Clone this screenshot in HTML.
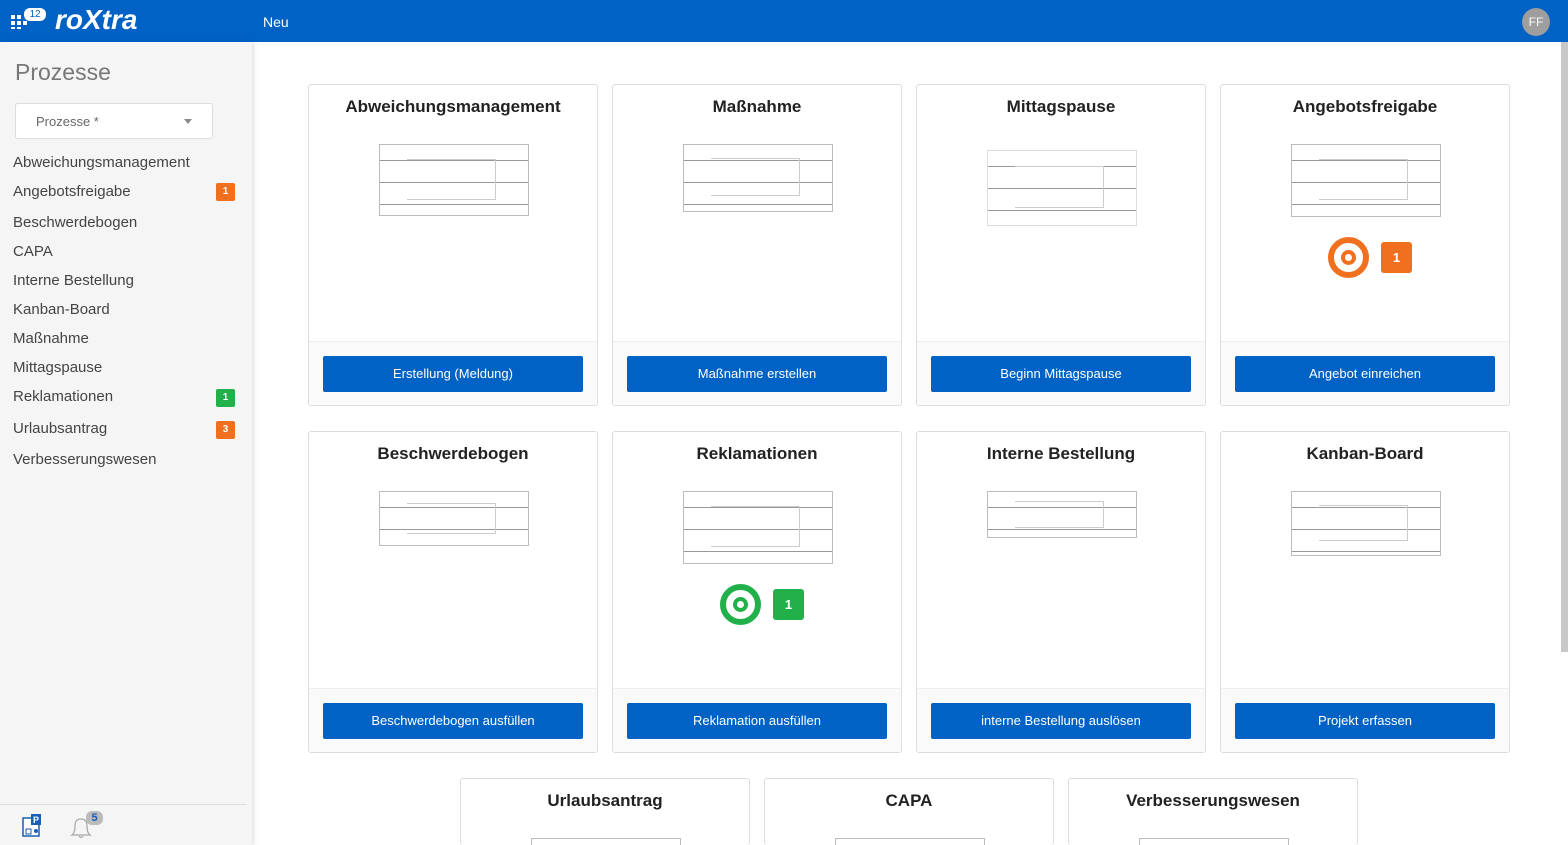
<!DOCTYPE html>
<html style="width:1568px;height:845px;overflow:hidden"><head><meta charset="utf-8"><style>
*{box-sizing:border-box;margin:0;padding:0}
body{width:1568px;height:845px;overflow:hidden;font-family:"Liberation Sans",sans-serif;background:#fff;position:relative}
.top{position:absolute;left:0;top:0;width:1568px;height:42px;background:#0062c4;color:#fff}
.logo{position:absolute;left:55px;top:4px;font-size:28px;font-weight:bold;font-style:italic}
.neu{position:absolute;left:263px;top:14px;font-size:14px}
.av{position:absolute;left:1522px;top:8px;width:28px;height:28px;border-radius:50%;background:#9e9e9e;color:#fff;font-size:12px;text-align:center;line-height:28px}
.side{position:absolute;left:0;top:42px;width:252px;height:803px;background:#f5f5f5;box-shadow:2px 0 4px rgba(0,0,0,.12)}
.side h1{position:absolute;left:15px;top:17px;font-weight:300;font-size:23px;color:#777}
.sel{position:absolute;left:15px;top:61px;width:198px;height:36px;background:#fff;border:1px solid #ddd;border-radius:3px;font-size:13px;color:#666;padding:10px 20px}
.sel:after{content:"";position:absolute;right:20px;top:15px;border:4px solid transparent;border-top:5px solid #888}
.item{position:absolute;left:13px;font-size:15px;color:#444}
.bd{position:absolute;left:216px;width:19px;height:18px;border-radius:2px;color:#fff;font-size:10px;font-weight:bold;text-align:center;line-height:18px}
.card{position:absolute;width:290px;height:322px;border:1px solid #ddd;border-radius:3px;background:#fff;overflow:hidden}
.card h2{text-align:center;font-size:17px;font-weight:bold;color:#222;margin-top:12px}
.foot{position:absolute;left:0;right:0;top:256px;bottom:0;background:#fafafa;border-top:1px solid #eee}
.btn{position:absolute;left:14px;top:14px;width:260px;height:36px;background:#0062c4;color:#fff;font-size:13px;text-align:center;line-height:36px;border-radius:2px}
.dg{position:absolute;border:1px solid #bbb;background:repeating-linear-gradient(#fff 0 15px,#999 15px 16px,#fff 16px 22px);}
.dg:before{content:"";position:absolute;left:18%;top:20%;width:60%;height:55%;border:1px solid #ccc;border-left:none}
</style></head><body>
<div class="top">
<svg style="position:absolute;left:11px;top:13px" width="18" height="16"><g fill="#fff"><rect x="0" y="2" width="4" height="4"/><rect x="6" y="2" width="4" height="4"/><rect x="0" y="8" width="4" height="4"/><rect x="6" y="8" width="4" height="4"/><rect x="12" y="8" width="4" height="4"/><rect x="0" y="14" width="4" height="2"/><rect x="6" y="14" width="4" height="2"/></g></svg>
<div style="position:absolute;left:24px;top:8px;width:22px;height:13px;background:#fff;border-radius:6px;color:#0062c4;font-size:10px;text-align:center;line-height:13px">12</div>
<div class="logo">roXtra</div>
<div class="neu">Neu</div>
<div class="av">FF</div>
</div>
<div class="side">
<h1>Prozesse</h1>
<div class="sel">Prozesse *</div>
<div class="item" style="top:112px">Abweichungsmanagement</div>
<div class="item" style="top:141px">Angebotsfreigabe</div><div class="bd" style="top:141px;background:#f07020">1</div>
<div class="item" style="top:172px">Beschwerdebogen</div>
<div class="item" style="top:201px">CAPA</div>
<div class="item" style="top:230px">Interne Bestellung</div>
<div class="item" style="top:259px">Kanban-Board</div>
<div class="item" style="top:288px">Maßnahme</div>
<div class="item" style="top:317px">Mittagspause</div>
<div class="item" style="top:346px">Reklamationen</div><div class="bd" style="top:347px;background:#22b04a">1</div>
<div class="item" style="top:378px">Urlaubsantrag</div><div class="bd" style="top:379px;background:#f07020">3</div>
<div class="item" style="top:409px">Verbesserungswesen</div>
<div style="position:absolute;left:0;top:762px;width:247px;border-top:1px solid #ddd"></div>
<svg style="position:absolute;left:22px;top:771px" width="20" height="24"><rect x="1" y="5" width="16" height="18" fill="#fff" stroke="#1a5fb4" stroke-width="1.5"/><rect x="9" y="1" width="10" height="11" fill="#1a5fb4"/><text x="11" y="10" font-size="9" fill="#fff" font-weight="bold" font-family="Liberation Sans">P</text><rect x="4" y="16" width="5" height="5" fill="none" stroke="#1a5fb4"/><circle cx="14" cy="18" r="2" fill="#1a5fb4"/></svg>
<svg style="position:absolute;left:68px;top:773px" width="26" height="24"><path d="M4 20 Q7 18 7 11 Q7 4 13 4 Q19 4 19 11 Q19 18 22 20 Z M11 21 Q13 24 15 21" fill="none" stroke="#aaa" stroke-width="1.3"/></svg>
<div style="position:absolute;left:86px;top:769px;width:17px;height:14px;background:#bbb;border-radius:6px;color:#1a5fb4;font-size:11px;font-weight:bold;text-align:center;line-height:14px">5</div>
</div>
<div style="position:absolute;left:1561px;top:42px;width:7px;height:610px;background:#c8c8c8"></div>

<div class="card" style="left:308px;top:84px"><h2>Abweichungsmanagement</h2><div class="dg" style="left:70px;top:59px;width:150px;height:72px"></div><div class="foot"><div class="btn">Erstellung (Meldung)</div></div></div>
<div class="card" style="left:612px;top:84px"><h2>Maßnahme</h2><div class="dg" style="left:70px;top:59px;width:150px;height:68px"></div><div class="foot"><div class="btn">Maßnahme erstellen</div></div></div>
<div class="card" style="left:916px;top:84px"><h2>Mittagspause</h2><div class="dg" style="left:70px;top:65px;width:150px;height:76px;border-color:#ddd"></div><div class="foot"><div class="btn">Beginn Mittagspause</div></div></div>
<div class="card" style="left:1220px;top:84px"><h2>Angebotsfreigabe</h2><div class="dg" style="left:70px;top:59px;width:150px;height:73px"></div>
<div style="position:absolute;left:107px;top:152px;width:41px;height:41px;border-radius:50%;border:6px solid #f07020"><div style="position:absolute;left:7px;top:7px;width:15px;height:15px;border-radius:50%;border:4px solid #f07020"></div></div>
<div style="position:absolute;left:160px;top:157px;width:31px;height:31px;background:#f07020;border-radius:3px;color:#fff;font-weight:bold;font-size:13px;text-align:center;line-height:31px">1</div>
<div class="foot"><div class="btn">Angebot einreichen</div></div></div>

<div class="card" style="left:308px;top:431px"><h2>Beschwerdebogen</h2><div class="dg" style="left:70px;top:59px;width:150px;height:55px"></div><div class="foot"><div class="btn">Beschwerdebogen ausfüllen</div></div></div>
<div class="card" style="left:612px;top:431px"><h2>Reklamationen</h2><div class="dg" style="left:70px;top:59px;width:150px;height:73px"></div>
<div style="position:absolute;left:107px;top:152px;width:41px;height:41px;border-radius:50%;border:6px solid #22b04a"><div style="position:absolute;left:7px;top:7px;width:15px;height:15px;border-radius:50%;border:4px solid #22b04a"></div></div>
<div style="position:absolute;left:160px;top:157px;width:31px;height:31px;background:#22b04a;border-radius:3px;color:#fff;font-weight:bold;font-size:13px;text-align:center;line-height:31px">1</div>
<div class="foot"><div class="btn">Reklamation ausfüllen</div></div></div>
<div class="card" style="left:916px;top:431px"><h2>Interne Bestellung</h2><div class="dg" style="left:70px;top:59px;width:150px;height:47px"></div><div class="foot"><div class="btn">interne Bestellung auslösen</div></div></div>
<div class="card" style="left:1220px;top:431px"><h2>Kanban-Board</h2><div class="dg" style="left:70px;top:59px;width:150px;height:65px"></div><div class="foot"><div class="btn">Projekt erfassen</div></div></div>

<div class="card" style="left:460px;top:778px;height:67px;border-bottom:none"><h2>Urlaubsantrag</h2><div class="dg" style="left:70px;top:59px;width:150px;height:30px"></div></div>
<div class="card" style="left:764px;top:778px;height:67px;border-bottom:none"><h2>CAPA</h2><div class="dg" style="left:70px;top:59px;width:150px;height:30px"></div></div>
<div class="card" style="left:1068px;top:778px;height:67px;border-bottom:none"><h2>Verbesserungswesen</h2><div class="dg" style="left:70px;top:59px;width:150px;height:30px"></div></div>
</body></html>
